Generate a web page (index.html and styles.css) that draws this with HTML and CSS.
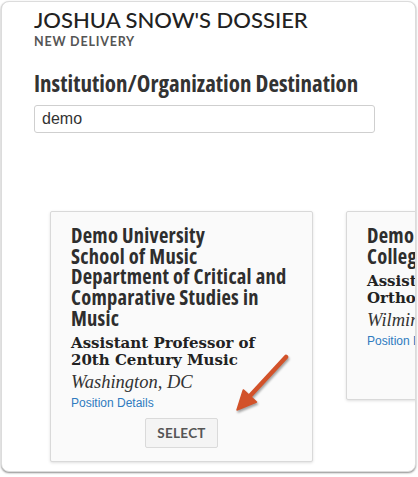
FILE: index.html
```html
<!DOCTYPE html>
<html>
<head>
<meta charset="utf-8">
<link rel="stylesheet" href="styles.css">
</head>
<body>
<div class="frame">
  <header class="head">
    <h1 class="title">JOSHUA SNOW'S DOSSIER</h1>
    <div class="sub">NEW DELIVERY</div>
  </header>
  <h2 class="dest">Institution/Organization Destination</h2>
  <input class="search" type="text" value="demo">
  <div class="cards">
    <div class="card">
      <div class="org">
        <div>Demo University</div>
        <div>School of Music</div>
        <div>Department of Critical and Comparative Studies in Music</div>
      </div>
      <div class="pos">Assistant Professor of 20th Century Music</div>
      <div class="loc">Washington, DC</div>
      <a class="details" href="#">Position Details</a>
      <div class="act"><button class="select">SELECT</button></div>
    </div>
    <div class="card">
      <div class="org">
        <div>Demo</div>
        <div>College of Dentistry</div>
      </div>
      <div class="pos">Assistant Professor of<br>Orthodontics</div>
      <div class="loc">Wilmington, DE</div>
      <a class="details" href="#">Position Details</a>
      <div class="act"><button class="select">SELECT</button></div>
    </div>
  </div>
</div>
<svg class="arrow" width="418" height="477" viewBox="0 0 418 477">
  <g class="arrow-g">
    <line x1="286" y1="357" x2="249" y2="397" stroke="#d2522a" stroke-width="4.5" stroke-linecap="round"/>
    <polygon points="237,410 243.3,389.9 256.5,402.1" fill="#d2522a" stroke="#d2522a" stroke-width="1.5" stroke-linejoin="round"/>
  </g>
</svg>
</body>
</html>
```
FILE: styles.css
```css
html, body { margin: 0; padding: 0; background: #fff; }
body { position: relative; width: 418px; height: 477px; overflow: hidden; }

.frame {
  box-sizing: border-box;
  margin: 1px 0 0 1px;
  width: 415px;
  height: 471px;
  border: 1px solid #dcdcdc;
  border-radius: 8px;
  box-shadow: 0 1px 2px rgba(0,0,0,0.45);
  background: #fff;
  padding: 5px 0 0 32px;
  overflow: hidden;
}

.head { margin: 0; }
.title {
  margin: 0;
  font-family: Lato, "Liberation Sans", sans-serif;
  font-weight: 500;
  font-size: 22px;
  line-height: 26px;
  color: #222;
}
.sub {
  margin-top: 2px;
  font-family: Lato, "Liberation Sans", sans-serif;
  font-weight: 700;
  font-size: 12.5px;
  line-height: 14px;
  letter-spacing: 0.8px;
  color: #555;
}

.dest {
  margin: 20px 0 0;
  font-family: "Open Sans", sans-serif;
  font-stretch: 75%;
  font-weight: 700;
  font-size: 23px;
  line-height: 28px;
  color: #333;
  white-space: nowrap;
}

.search {
  display: block;
  box-sizing: border-box;
  margin: 8px 0 0;
  width: 341px;
  height: 28px;
  border: 1px solid #cfcfcf;
  border-radius: 3px;
  padding: 0 7px;
  font-family: "Liberation Sans", Arial, sans-serif;
  font-size: 16px;
  color: #333;
  background: #fff;
  outline: none;
}

.cards {
  display: flex;
  align-items: flex-start;
  gap: 33px;
  margin: 78px 0 0 16px;
}

.card {
  flex: 0 0 auto;
  box-sizing: border-box;
  width: 263px;
  padding: 13px 20px 13px;
  border: 1px solid #d9d9d9;
  border-radius: 2px;
  background: #fafafa;
  box-shadow: 0 1px 3px rgba(0,0,0,0.13);
}

.org {
  font-family: "Open Sans", sans-serif;
  font-stretch: 75%;
  font-weight: 700;
  font-size: 20.5px;
  letter-spacing: 0.25px;
  line-height: 20.7px;
  color: #2e2e2e;
}

.pos {
  margin-top: 6.5px;
  font-family: "DejaVu Serif", Georgia, serif;
  font-weight: 700;
  font-size: 15px;
  line-height: 17px;
  color: #222;
}

.loc {
  margin-top: 2px;
  font-family: "Liberation Serif", Georgia, serif;
  font-style: italic;
  font-size: 18.5px;
  line-height: 22px;
  color: #333;
  white-space: nowrap;
}

.details {
  display: block;
  margin-top: 2px;
  font-family: "Liberation Sans", Arial, sans-serif;
  font-size: 12px;
  line-height: 16px;
  color: #2f7bbf;
  text-decoration: none;
  white-space: nowrap;
}

.act {
  display: flex;
  justify-content: center;
  margin-top: 7px;
}

.select {
  box-sizing: border-box;
  width: 73px;
  height: 30px;
  border: 1px solid #dadada;
  border-radius: 2px;
  background: #f4f4f4;
  font-family: Lato, "Liberation Sans", sans-serif;
  font-weight: 700;
  font-size: 13.5px;
  letter-spacing: 0.3px;
  color: #555;
  padding: 0;
}

.arrow {
  position: absolute;
  left: 0;
  top: 0;
  pointer-events: none;
}
.arrow-g { filter: drop-shadow(1px 2px 1.2px rgba(0,0,0,0.35)); }
```
